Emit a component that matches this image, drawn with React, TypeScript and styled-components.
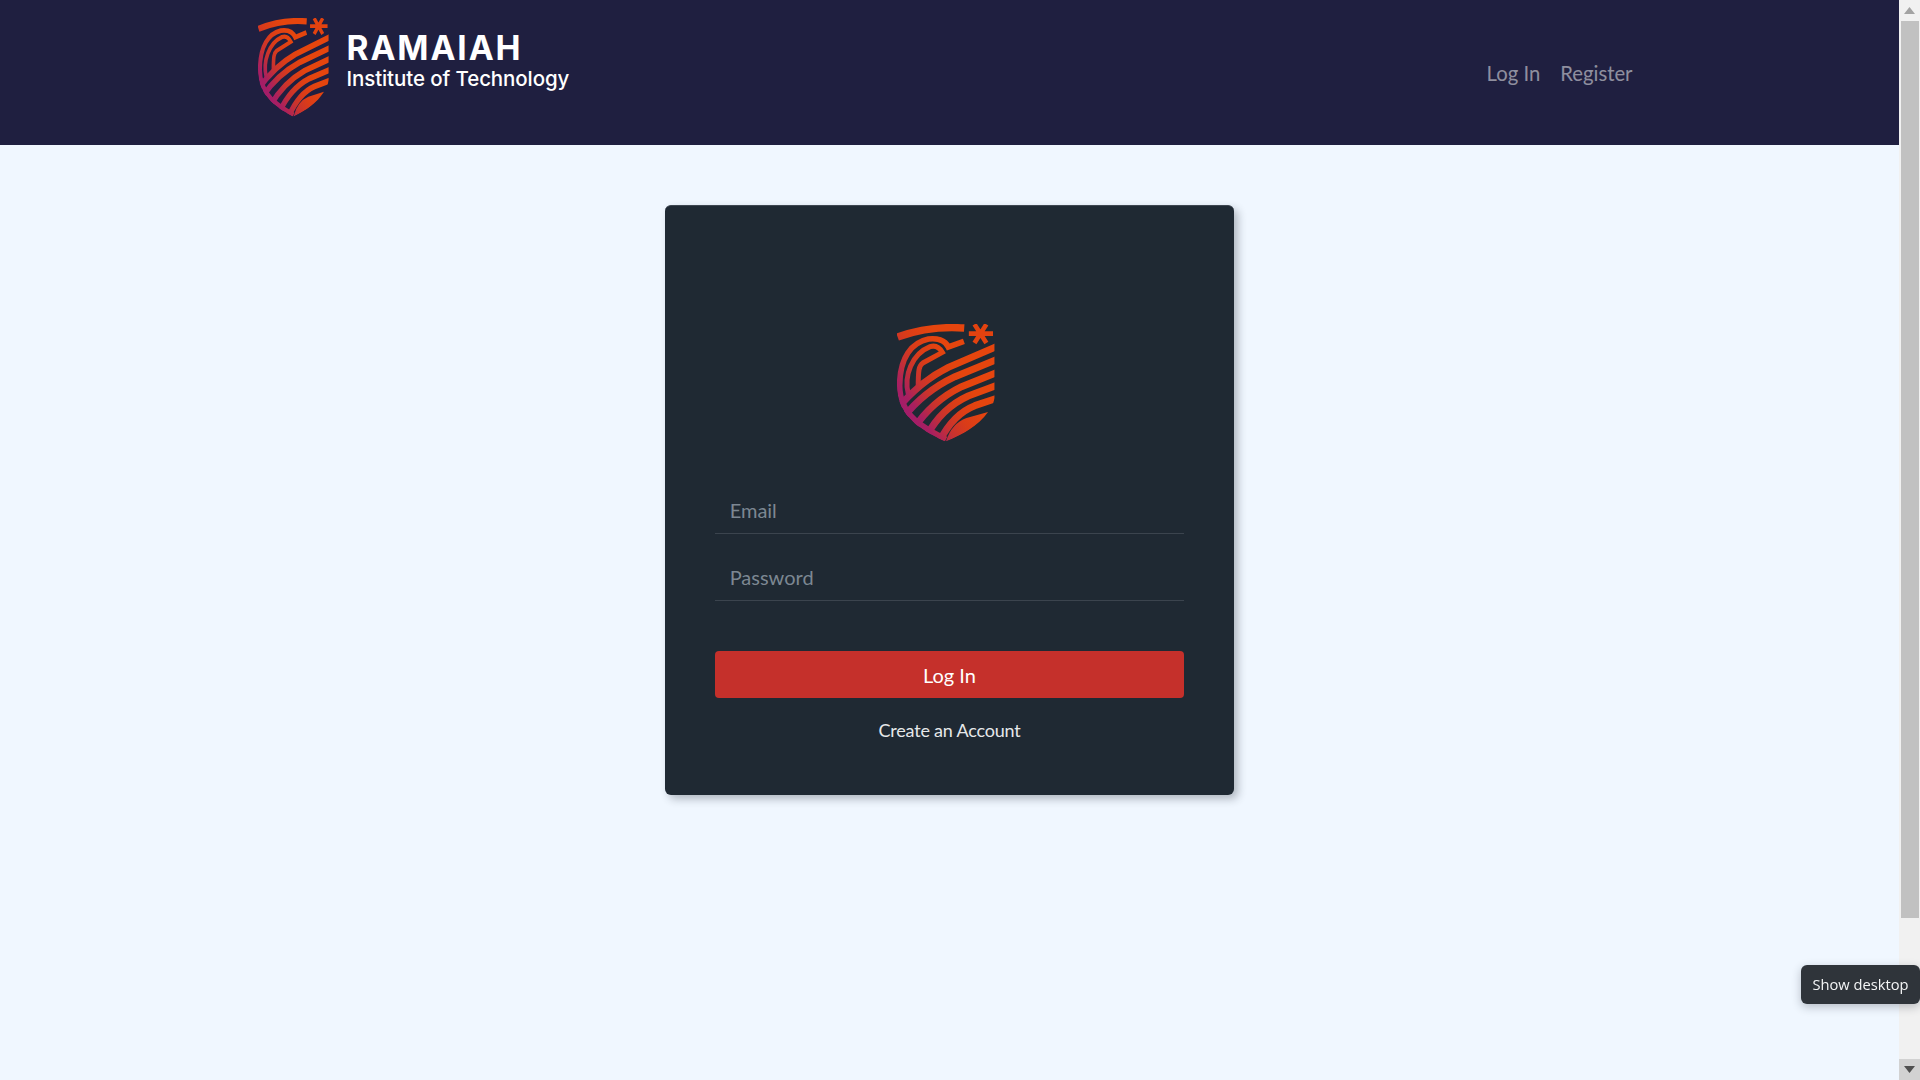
import React, { useId } from "react";
import styled, { createGlobalStyle } from "styled-components";

const Global = createGlobalStyle`
  html, body { margin: 0; height: 100%; overflow: hidden; }
  body { font-family: Lato, "Liberation Sans", sans-serif; }
  * { box-sizing: border-box; }
`;

const Shell = styled.div`
  height: 100vh;
  display: flex;
`;

const Page = styled.main`
  flex: 1;
  min-width: 0;
  background: #f0f7ff;
  overflow: hidden;
`;

const ScrollRail = styled.div`
  width: 21px;
  flex: none;
  display: flex;
  flex-direction: column;
  background: #f1f1f1;
`;

const ScrollButton = styled.div<{ $pressed?: boolean }>`
  height: 21px;
  flex: none;
  display: flex;
  align-items: center;
  justify-content: center;
  background: ${(p) => (p.$pressed ? "#d2d2d2" : "#f1f1f1")};
  margin-top: ${(p) => (p.$pressed ? "auto" : "0")};
`;

const ScrollThumb = styled.div`
  height: 897px;
  margin: 0 1px 0 2px;
  background: #c1c1c1;
`;

const Arrow = styled.svg`
  width: 11px;
  height: 7px;
`;

const Header = styled.header`
  height: 145px;
  background: #1f1f40;
`;

const HeaderInner = styled.div`
  width: 1400px;
  height: 100%;
  margin: 0 auto;
  padding: 0 8px;
  display: flex;
  justify-content: space-between;
`;

const Brand = styled.a`
  display: flex;
  align-items: flex-start;
  padding-top: 18px;
  gap: 18px;
  color: #fff;
  text-decoration: none;
`;

const HeaderShield = styled.svg`
  width: 71px;
  height: 99px;
  flex: none;
`;

const BrandText = styled.div`
  display: flex;
  flex-direction: column;
  padding-top: 11px;
  font-family: Inter, "Liberation Sans", sans-serif;
`;

const BrandName = styled.span`
  font-size: 33.5px;
  line-height: 38px;
  font-weight: 700;
  letter-spacing: 1.9px;
`;

const BrandSub = styled.span`
  font-size: 20.5px;
  line-height: 25px;
  font-weight: 500;
  letter-spacing: -0.1px;
  margin-top: -1px;
`;

const Nav = styled.nav`
  display: flex;
  align-items: flex-start;
  padding: 57px 1px 0 0;
  gap: 4px;
`;

const NavLink = styled.a`
  padding: 0 8px;
  font-size: 20.3px;
  line-height: 32px;
  color: rgba(255, 255, 255, 0.5);
  text-decoration: none;
`;

const Card = styled.form`
  width: 569.7px;
  height: 590px;
  margin: 60px auto 0;
  padding: 118px 50px 0;
  background: #1f2933;
  border-top: 1px solid #3d4650;
  border-radius: 6px;
  box-shadow: 4px 4px 8px rgba(31, 41, 51, 0.3);
  display: flex;
  flex-direction: column;
`;

const CardShield = styled.svg`
  width: 98px;
  height: 118px;
  margin-left: 182px;
  flex: none;
`;

const Field = styled.input`
  height: 45px;
  flex: none;
  padding: 0 15px 2px;
  background: transparent;
  border: 0;
  border-bottom: 1px solid #3b444e;
  border-radius: 0;
  font-family: inherit;
  font-size: 20px;
  color: #fff;
  outline: none;
  &::placeholder { color: #7c8792; opacity: 1; }
`;

const EmailField = styled(Field)`
  margin-top: 47px;
`;

const PasswordField = styled(Field)`
  margin-top: 22px;
`;

const Submit = styled.button`
  height: 47px;
  flex: none;
  margin-top: 50px;
  border: 0;
  border-radius: 4px;
  background: #c5302b;
  color: #fff;
  font-family: inherit;
  font-size: 20px;
`;

const CreateLink = styled.a`
  margin-top: 19px;
  text-align: center;
  font-size: 18px;
  line-height: 27px;
  letter-spacing: -0.2px;
  color: #e6e8ea;
  text-decoration: none;
`;

const DesktopTip = styled.div`
  position: fixed;
  right: 0;
  top: 965px;
  width: 119px;
  height: 39px;
  padding-bottom: 2px;
  display: flex;
  align-items: center;
  justify-content: center;
  border-radius: 6px;
  background: #2f343a;
  box-shadow: 0 3px 10px rgba(31, 41, 51, 0.28);
  color: #f4f5f6;
  font-family: "Open Sans", "Noto Sans", sans-serif;
  font-size: 14.7px;
`;

const stripes = [
  "M360 104 L205 170 Q120 212 50 295",
  "M360 143 L225 198 Q130 243 70 320",
  "M360 182 L245 228 Q155 272 100 355",
  "M360 221 L265 256 Q185 292 140 375",
  "M360 260 L285 285 Q220 310 178 392",
];

function Shield({ as: Svg }: { as: typeof HeaderShield }) {
  const id = useId().replace(/[^a-zA-Z0-9]/g, "");
  const paint = `url(#g${id})`;
  return (
    <Svg viewBox="50 40 296 354" preserveAspectRatio="none" role="img" aria-label="Ramaiah shield">
      <defs>
        <linearGradient id={`g${id}`} gradientUnits="userSpaceOnUse" x1="60" y1="330" x2="300" y2="170">
          <stop offset="0" stopColor="#9e1b72" />
          <stop offset="0.2" stopColor="#a81f60" />
          <stop offset="0.38" stopColor="#c8322f" />
          <stop offset="0.55" stopColor="#da3c18" />
          <stop offset="0.8" stopColor="#e5450e" />
        </linearGradient>
        <clipPath id={`c${id}`}>
          <path d="M40 60 H345 V262 C335 300 325 310 318 318 C280 355 240 375 198 393 C130 362 50 320 50 225 Z" />
        </clipPath>
      </defs>
      <path d="M52 79 C110 58 180 47 253 52" fill="none" stroke={paint} strokeWidth="22" />
      <path d="M267 69 H340 M284 97 L320 41 M320 97 L284 41" fill="none" stroke="#e2420f" strokeWidth="14" />
      <g clipPath={`url(#c${id})`} fill="none" stroke={paint}>
        <path strokeWidth="17" d="M252 92 L205 109 C195 88 170 82 145 85 C95 95 58 140 58 225 C58 316 134 354 198 386" />
        <path strokeWidth="15" d="M84 250 C70 195 95 130 150 108 C165 103 178 110 187 125 L128 157 C116 165 114 178 114 232" />
        {stripes.map((d) => (
          <path key={d} d={d} strokeWidth="21" />
        ))}
        <path d="M325 304 L260 322 Q215 338 198 392 C250 372 295 345 325 304 Z" fill={paint} stroke="none" />
      </g>
    </Svg>
  );
}

export default function App() {
  return (
    <>
      <Global />
      <Shell>
        <Page>
          <Header>
            <HeaderInner>
              <Brand href="#">
                <Shield as={HeaderShield} />
                <BrandText>
                  <BrandName>RAMAIAH</BrandName>
                  <BrandSub>Institute of Technology</BrandSub>
                </BrandText>
              </Brand>
              <Nav>
                <NavLink href="#">Log In</NavLink>
                <NavLink href="#">Register</NavLink>
              </Nav>
            </HeaderInner>
          </Header>
          <Card onSubmit={(e) => e.preventDefault()}>
            <Shield as={CardShield} />
            <EmailField type="email" placeholder="Email" />
            <PasswordField type="password" placeholder="Password" />
            <Submit type="submit">Log In</Submit>
            <CreateLink href="#">Create an Account</CreateLink>
          </Card>
        </Page>
        <ScrollRail>
          <ScrollButton>
            <Arrow viewBox="0 0 11 7"><path d="M5.5 0 L11 7 H0 Z" fill="#a3a3a3" /></Arrow>
          </ScrollButton>
          <ScrollThumb />
          <ScrollButton $pressed>
            <Arrow viewBox="0 0 11 7"><path d="M5.5 7 L11 0 H0 Z" fill="#505050" /></Arrow>
          </ScrollButton>
        </ScrollRail>
      </Shell>
      <DesktopTip>Show desktop</DesktopTip>
    </>
  );
}
